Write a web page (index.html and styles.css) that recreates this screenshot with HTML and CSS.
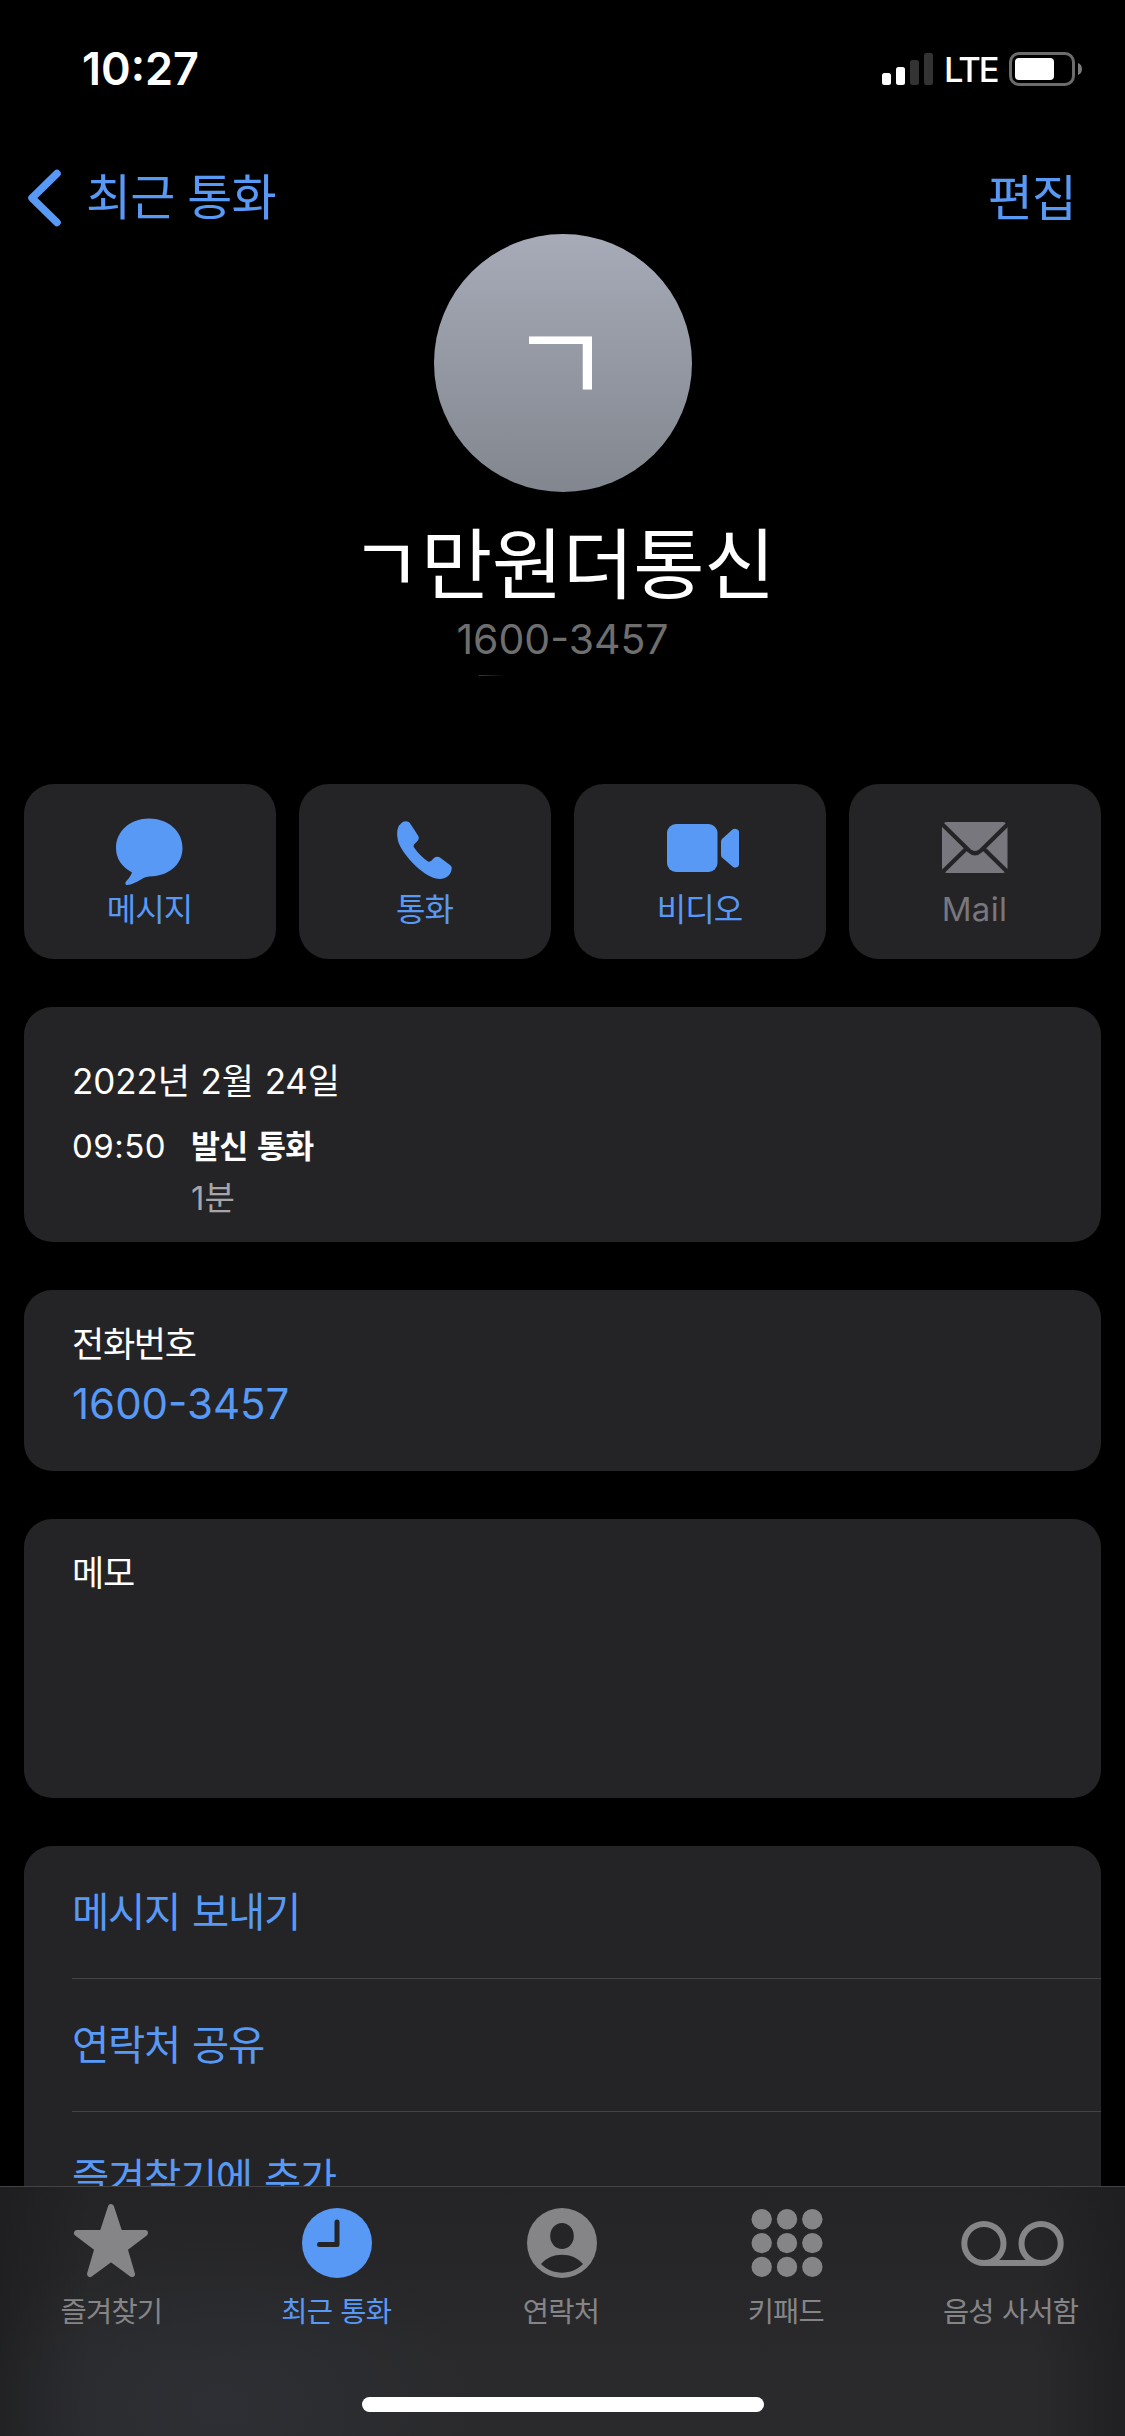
FILE: index.html
```html
<!DOCTYPE html>
<html lang="ko">
<head>
<meta charset="utf-8">
<title>ㄱ만원더통신</title>
<link rel="stylesheet" href="styles.css">
</head>
<body>
<div class="phone">
  <main class="screen">
    <div class="status">
      <span class="clock">10:27</span>
      <div class="indicators">
        <svg class="signal" width="51" height="32" viewBox="0 0 51 32">
          <rect x="0" y="20" width="9" height="12" rx="2.5" fill="#fff"/>
          <rect x="14" y="14" width="9" height="18" rx="2.5" fill="#fff"/>
          <rect x="28" y="7" width="9" height="25" rx="2.5" fill="#333"/>
          <rect x="42" y="0" width="9" height="32" rx="2.5" fill="#333"/>
        </svg>
        <span class="network">LTE</span>
        <svg class="battery" width="74" height="34" viewBox="0 0 74 34">
          <rect x="1.5" y="1.5" width="63" height="31" rx="8.5" fill="none" stroke="#6c6c6c" stroke-width="3"/>
          <rect x="6" y="6" width="39" height="22" rx="4" fill="#fff"/>
          <path d="M69 11c5.300 1.500 5.300 10.500 0 12z" fill="#7c7c7c"/>
        </svg>
      </div>
    </div>

    <nav class="navbar">
      <a class="back">
        <svg width="34" height="58" viewBox="0 0 34 58"><path d="M29 4.500 4 29l25 24.500" fill="none" stroke="#5999f6" stroke-width="7.500" stroke-linecap="round" stroke-linejoin="round"/></svg>
        <span>최근 통화</span>
      </a>
      <a class="edit">편집</a>
    </nav>

    <header class="contact">
      <div class="avatar"><span>ㄱ</span></div>
      <h1 class="name">ㄱ만원더통신</h1>
      <p class="number">1600-3457</p>
      <div class="trace"></div>
    </header>

    <div class="actions">
      <a class="action">
        <svg width="70" height="70" viewBox="1 0 70 70"><path d="M35 3.500C53.500 3.500 68.500 15.500 68.500 33S53.500 61.500 35 61.500Q32 61.500 29.500 63C24 66.500 16 70.500 12.500 70Q10.500 69 12 66.500C15 63 16.500 61.500 18 57.500Q2 48.500 2 33C2 15.500 17 3.500 35 3.500Z" fill="#5999f6"/></svg>
        <span>메시지</span>
      </a>
      <a class="action">
        <svg width="70" height="70" viewBox="0 0 70 70"><path d="M12 7.500C15 5.500 19 6 20.500 9L28 20.500Q30 23.500 27 26.500L24 29.500Q23 31 24 32.500Q30 41 38 46.500Q39.500 47 41 46L44 43Q46.500 41 50 42.500L60 50Q62.500 52 61.500 55C60 62 54 65 46 63.500C32 60.500 12 39 8 26Q5 12.500 12 7.500Z" fill="#5999f6"/></svg>
        <span>통화</span>
      </a>
      <a class="action">
        <svg width="74" height="70" viewBox="-1 0 74 70"><rect x="3" y="9" width="50.500" height="48" rx="9" fill="#5999f6"/><path d="M57 26.500Q57 25 58 24L68.500 14.500Q70 13.500 72 14Q75 14.500 75 17V49Q75 52 72 52.500Q70 53 68.500 51.500L58 42.500Q57 41.500 57 40Z" fill="#5999f6"/></svg>
        <span>비디오</span>
      </a>
      <a class="action action-off">
        <svg width="70" height="70" viewBox="0 0 70 70"><rect x="2" y="7" width="65.500" height="51" rx="5" fill="#78777d"/><path d="M1 8 29 35.500Q35 41 41 35.500L69 8M1 58.500 26.500 33.500M69 58.500 43.500 33.500" fill="none" stroke="#242426" stroke-width="4.200"/></svg>
        <span class="latin">Mail</span>
      </a>
    </div>

    <section class="card call">
      <div class="date">2022년 2월 24일</div>
      <div class="call-row"><span class="time">09:50</span><strong>발신 통화</strong></div>
      <div class="duration">1분</div>
    </section>

    <section class="card phone-card">
      <div class="label">전화번호</div>
      <div class="value">1600-3457</div>
    </section>

    <section class="card memo">
      <div class="label">메모</div>
    </section>

    <section class="card list">
      <a class="item">메시지 보내기</a>
      <a class="item">연락처 공유</a>
      <a class="item">즐겨찾기에 추가</a>
    </section>
  </main>

  <footer class="tabbar">
    <div class="tabs">
      <a class="tab">
        <svg width="78" height="78" viewBox="0 0 78 78"><path d="M39 5 47.500 31H73L52.500 46.500 60 72 39 56.500 18 72 25.500 46.500 5 31H30.500Z" fill="#858587" stroke="#858587" stroke-width="6" stroke-linejoin="round"/></svg>
        <span>즐겨찾기</span>
      </a>
      <a class="tab tab-active">
        <svg width="78" height="78" viewBox="-1 0 78 78"><circle cx="39" cy="41" r="35" fill="#5999f6"/><path d="M39 20V42.500H21.500" fill="none" stroke="#252527" stroke-width="5" stroke-linecap="round" stroke-linejoin="round"/></svg>
        <span>최근 통화</span>
      </a>
      <a class="tab">
        <svg width="78" height="78" viewBox="-1 0 78 78"><circle cx="39" cy="41" r="35" fill="#858587"/><ellipse cx="39" cy="34" rx="11.800" ry="13" fill="#252527"/><path d="M18 62C28 49.500 50 49.500 60 62C49 73.500 29 73.500 18 62Z" fill="#252527"/></svg>
        <span>연락처</span>
      </a>
      <a class="tab">
        <svg width="78" height="78" viewBox="-1 0 78 78" fill="#858587"><circle cx="13.700" cy="17.300" r="10.200"/><circle cx="39" cy="17.300" r="10.200"/><circle cx="64.300" cy="17.300" r="10.200"/><circle cx="13.700" cy="41.100" r="10.200"/><circle cx="39" cy="41.100" r="10.200"/><circle cx="64.300" cy="41.100" r="10.200"/><circle cx="13.700" cy="64.900" r="10.200"/><circle cx="39" cy="64.900" r="10.200"/><circle cx="64.300" cy="64.900" r="10.200"/></svg>
        <span>키패드</span>
      </a>
      <a class="tab">
        <svg width="104" height="78" viewBox="-1.500 0 104 78" fill="none" stroke="#858587" stroke-width="6"><circle cx="23.400" cy="41.500" r="19.600"/><circle cx="80.600" cy="41.500" r="19.600"/><path d="M23.400 61.100H80.600"/></svg>
        <span>음성 사서함</span>
      </a>
    </div>
    <div class="home-indicator"></div>
  </footer>
</div>
</body>
</html>
```
FILE: styles.css
```css
* { box-sizing: border-box; }

body {
  margin: 0;
  background: #000;
  color: #fff;
  font-family: Inter, "Noto Sans CJK KR", sans-serif;
}

h1, p { margin: 0; font-weight: 400; }
svg { display: block; flex: none; overflow: visible; }
span, strong, a, h1 { white-space: nowrap; }

.phone {
  width: 1125px;
  height: 2436px;
  display: flex;
  flex-direction: column;
  overflow: hidden;
}

.screen {
  height: 2186px;
  flex: none;
  overflow: hidden;
}

/* Status bar */
.status {
  height: 138px;
  padding: 0 42px 0 82px;
  display: flex;
  align-items: center;
  justify-content: space-between;
}
.clock { font-size: 45px; font-weight: 600; line-height: 60px; }
.indicators { display: flex; align-items: center; }
.network { margin-left: 11px; padding-top: 1px; width: 65px; font-size: 34.500px; font-weight: 500; line-height: 40px; letter-spacing: -2px; }

/* Navigation */
.navbar {
  height: 96px;
  padding: 23px 49px 0 28px;
  display: flex;
  justify-content: space-between;
  color: #5999f6;
  font-size: 49px;
  line-height: 75px;
  letter-spacing: -0.900px;
}
.back { display: flex; align-items: center; gap: 24px; }

/* Contact header */
.contact {
  height: 550px;
  display: flex;
  flex-direction: column;
  align-items: center;
}
.avatar {
  width: 258px;
  height: 258px;
  padding: 2px 4px 0 0;
  border-radius: 50%;
  background: linear-gradient(#a7abb8, #82868e);
  display: flex;
  align-items: center;
  justify-content: center;
  font-size: 112px;
  line-height: 120px;
}
.name { margin-top: 23px; font-size: 77.500px; line-height: 100px; letter-spacing: -0.600px; }
.number { margin-top: 4px; font-size: 41px; line-height: 40px; color: #6e6e6e; }
.trace { width: 26px; height: 1px; margin: 16px 142px 0 0; background: linear-gradient(90deg, #3a3a3a, #000); }

/* Quick actions */
.actions {
  display: grid;
  grid-template-columns: repeat(4, 1fr);
  gap: 23px;
  padding: 0 24px;
  margin-bottom: 48px;
}
.action {
  height: 175px;
  padding-top: 31px;
  border-radius: 30px;
  background: #242426;
  color: #5999f6;
  display: flex;
  flex-direction: column;
  align-items: center;
  font-size: 32px;
  line-height: 40px;
  letter-spacing: -1px;
}
.action span { margin: 5px 1px 0 0; }
.action .latin { margin-top: 4px; font-size: 33px; letter-spacing: 0.300px; }
.action-off { color: #78777d; }

/* Cards */
.card {
  margin: 0 24px 48px;
  padding: 0 48px;
  border-radius: 28px;
  background: #242426;
}
.call { height: 235px; padding-top: 49px; }
.date { font-size: 35px; line-height: 50px; word-spacing: 1px; letter-spacing: -0.100px; }
.call-row { display: flex; margin-top: 19px; font-size: 33px; line-height: 42px; }
.time { width: 119px; letter-spacing: 0.500px; }
.call-row strong { padding-top: 1px; font-size: 31.500px; font-weight: 700; letter-spacing: -0.800px; word-spacing: 3px; }
.duration { margin: 10px 0 0 119px; font-size: 33px; line-height: 40px; color: #a5a5aa; }
.phone-card { height: 181px; padding-top: 34px; }
.label { font-size: 35px; line-height: 40px; letter-spacing: -1.300px; }
.value { margin-top: 20px; font-size: 42px; line-height: 40px; color: #5999f6; }
.memo { height: 279px; padding-top: 34px; }
.list { height: 400px; padding-right: 0; margin-bottom: 0; }
.item {
  display: block;
  height: 133px;
  border-bottom: 1px solid #434346;
  color: #5999f6;
  font-size: 40.500px;
  line-height: 133px;
  letter-spacing: -1.300px;
  word-spacing: 2px;
}

/* Tab bar */
.tabbar {
  height: 250px;
  flex: none;
  border-top: 1px solid #434346;
  background:
    radial-gradient(ellipse 260px 170px at 220px 220px, rgba(48, 52, 60, .5), rgba(48, 52, 60, 0)),
    linear-gradient(90deg, rgba(28, 28, 30, .7), transparent 90px, transparent 1035px, rgba(28, 28, 30, .7)),
    linear-gradient(#242426, #2a2a2c 70%);
}
.tabs { display: grid; grid-template-columns: repeat(5, 1fr); padding-right: 1px; }
.tab {
  padding: 15px 2px 0 0;
  display: flex;
  flex-direction: column;
  align-items: center;
  color: #858587;
  font-size: 28.500px;
  line-height: 40px;
  letter-spacing: -0.800px;
}
.tab span { margin-top: 12px; word-spacing: 1px; }
.tab-active { color: #5999f6; }
.home-indicator {
  width: 402px;
  height: 15px;
  margin: 65px auto 0;
  border-radius: 8px;
  background: #fff;
}
```
